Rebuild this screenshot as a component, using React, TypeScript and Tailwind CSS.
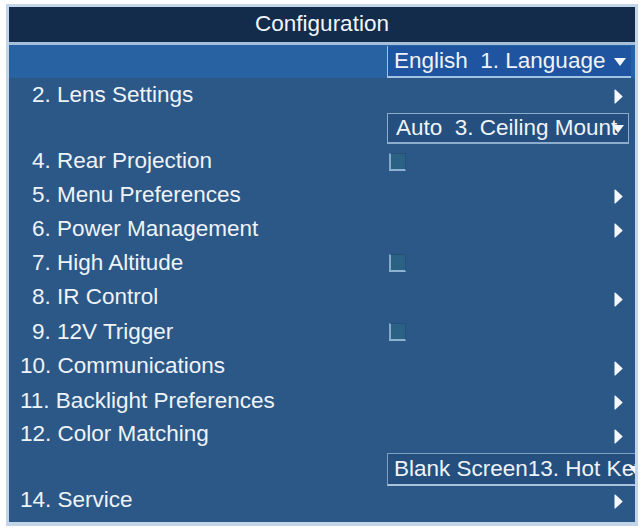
import React from "react";

const font = { fontFamily: '"Liberation Sans", Arial, sans-serif' };

function RightArrow() {
  return (
    <svg width="9" height="15" viewBox="0 0 9 15" className="mt-[3px]">
      <path d="M0.5 0.5 Q1 0.3 1.6 0.8 L8.3 6.9 Q8.8 7.5 8.3 8.1 L1.6 14.2 Q1 14.7 0.5 14.5 Z" fill="#f4f7fb" />
    </svg>
  );
}

function DownTri() {
  return (
    <svg width="12" height="8" viewBox="0 0 12 8">
      <path d="M0 0 H12 L6 8 Z" fill="#f4f7fb" />
    </svg>
  );
}

function Check() {
  return (
    <div className="ml-[2px] w-[17px] h-[18px] bg-[#2b6284] border-l-2 border-b-2 border-t border-r border-l-[#86a9c9] border-b-[#8fb2d2] border-t-[#24507a] border-r-[#24507a]" />
  );
}

type Kind = "arrow" | "check" | "none";

function Row({
  label,
  h,
  pl,
  kind,
  extra = "",
}: {
  label: string;
  h: string;
  pl: string;
  kind: Kind;
  extra?: string;
}) {
  return (
    <div className={`flex items-center ${h} ${extra}`}>
      <div className={`w-[378px] shrink-0 ${pl} whitespace-nowrap`}>{label}</div>
      <div className="flex-1 flex items-center">
        {kind === "check" && <Check />}
        {kind === "arrow" && (
          <div className="flex-1 flex justify-end pr-[12px]">
            <RightArrow />
          </div>
        )}
      </div>
    </div>
  );
}

export default function App() {
  return (
    <div className="w-[643px] h-[529px] bg-white pt-[4px] pl-[6px]" style={font}>
      <div className="w-[632px] h-[522px] border-l-[3px] border-r-[3px] border-t-[3px] border-b-[4px] border-[#c3d5e8] bg-[#2c5887] overflow-hidden flex flex-col text-[22.5px] leading-none text-[#eff3f8]">
        {/* header */}
        <div className="h-[35px] bg-[#132c4b] flex items-center justify-center text-[#f2f5f9]">
          Configuration
        </div>
        <div className="h-[3px] bg-[#a6c0dc]" />

        {/* 1. Language (highlighted) */}
        <div className="h-[33px] bg-[#2962a3] flex">
          <div className="w-[378px] shrink-0" />
          <div className="flex-1 pr-[4px] pt-[1px]">
            <div className="relative h-[32px] bg-[#1f55a0] border-l border-b-2 border-[#a2c2e6] flex items-center pl-[6px] whitespace-nowrap">
              English&nbsp; 1. Language
              <div className="absolute right-[5px] top-[12px]">
                <DownTri />
              </div>
            </div>
          </div>
        </div>

        <Row label="2. Lens Settings" h="h-[34px]" pl="pl-[23px]" kind="arrow" />

        {/* 3. Ceiling Mount */}
        <div className="h-[33px] flex">
          <div className="w-[378px] shrink-0" />
          <div className="flex-1 pr-[6px] pt-[1px]">
            <div className="relative h-[31px] bg-[#244f7e] border border-b-2 border-[#8eaccc] flex items-center pl-[8px] whitespace-nowrap">
              Auto&nbsp; 3. Ceiling Mount
              <div className="absolute right-[4px] top-[11px]">
                <DownTri />
              </div>
            </div>
          </div>
        </div>

        <Row label="4. Rear Projection" h="h-[33px]" pl="pl-[23px]" kind="check" />
        <Row label="5. Menu Preferences" h="h-[34px]" pl="pl-[23px]" kind="arrow" />
        <Row label="6. Power Management" h="h-[34px]" pl="pl-[23px]" kind="arrow" />
        <Row label="7. High Altitude" h="h-[34px]" pl="pl-[23px]" kind="check" />
        <Row label="8. IR Control" h="h-[35px]" pl="pl-[23px]" kind="arrow" />
        <Row label="9. 12V Trigger" h="h-[34px]" pl="pl-[23px]" kind="check" />
        <Row label="10. Communications" h="h-[35px]" pl="pl-[11px]" kind="arrow" />
        <Row label="11. Backlight Preferences" h="h-[34px]" pl="pl-[11px]" kind="arrow" />
        <Row label="12. Color Matching" h="h-[33px]" pl="pl-[11px]" kind="arrow" />

        {/* 13. Hot Key */}
        <div className="h-[35px] flex">
          <div className="w-[378px] shrink-0" />
          <div className="flex-1 pr-[6px] pt-[2px]">
            <div className="relative h-[33px] bg-[#244f7e] border border-b-2 border-[#7f9fc2] border-b-[#a9c3df] flex items-center pl-[6px] whitespace-nowrap">
              Blank Screen13. Hot Key
              <div className="absolute right-[4px] top-[12px]">
                <DownTri />
              </div>
            </div>
          </div>
        </div>

        <Row label="14. Service" h="h-[36px]" pl="pl-[11px]" kind="arrow" extra="pb-[8px]" />
      </div>
    </div>
  );
}
